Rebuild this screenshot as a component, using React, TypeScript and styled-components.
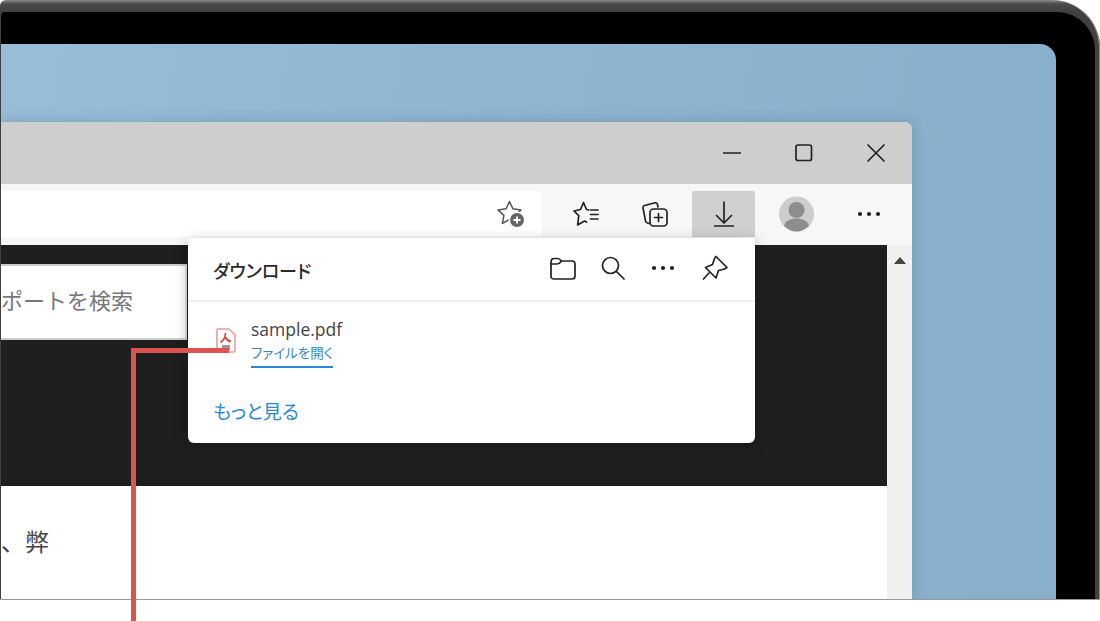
import React from 'react';
import styled, { createGlobalStyle } from 'styled-components';

const jp = `"Open Sans", "Noto Sans CJK JP", sans-serif`;

const GlobalStyle = createGlobalStyle`
  html, body {
    margin: 0;
    padding: 0;
    background: #fff;
  }
  #root {
    position: relative;
    width: 1100px;
    height: 621px;
    overflow: hidden;
    font-family: ${jp};
  }
`;

const Bezel = styled.div`
  box-sizing: border-box;
  width: 1100px;
  height: 600px;
  padding: 12px 5px 0 1px;
  background: linear-gradient(180deg, #8a8a8a 0, #4a4a4a 4px, #404040 12px);
  border-radius: 6px 48px 0 0;
  border-bottom: 1px solid #999;
  box-shadow: inset -1px 0 0 #8a8a8a;
`;

const Screen = styled.div`
  box-sizing: border-box;
  height: 100%;
  padding: 32px 39px 0 0;
  background: #000;
  border-radius: 4px 38px 0 0;
`;

const Desktop = styled.div`
  box-sizing: border-box;
  height: 100%;
  padding: 78px 144px 0 0;
  background: linear-gradient(100deg, #97bdd8 0, #8fb5d1 45%, #87aeca 100%);
  border-radius: 0 16px 0 0;
  overflow: hidden;
`;

const Browser = styled.div`
  position: relative;
  height: 100%;
  display: flex;
  flex-direction: column;
  border-radius: 0 8px 0 0;
  background: #fff;
  box-shadow: 0 0 14px rgba(40, 60, 80, 0.22);
`;

const TitleBar = styled.div`
  height: 62px;
  flex: none;
  display: flex;
  justify-content: flex-end;
  align-items: center;
  background: #cecece;
  border-radius: 0 8px 0 0;
`;

const WindowButton = styled.div`
  width: 72px;
  height: 31px;
  display: flex;
  align-items: center;
  justify-content: center;
`;

const Toolbar = styled.div`
  box-sizing: border-box;
  height: 61px;
  flex: none;
  display: flex;
  align-items: flex-start;
  gap: 6px;
  padding: 7px 12px 0 0;
  background: #f7f7f7;
`;

const AddressBar = styled.div`
  flex: 1;
  height: 46px;
  margin-right: 6px;
  display: flex;
  align-items: center;
  justify-content: flex-end;
  padding-right: 17px;
  background: #fff;
  border-radius: 0 6px 0 0;
`;

const ToolButton = styled.div<{ $active?: boolean; $wide?: boolean }>`
  width: ${(p) => (p.$wide ? 70 : 63)}px;
  height: 46px;
  flex: none;
  display: flex;
  align-items: center;
  justify-content: center;
  border-radius: 3px 3px 0 0;
  background: ${(p) => (p.$active ? '#d0d0d0' : 'transparent')};
`;

const Content = styled.div`
  flex: 1;
  display: flex;
  min-height: 0;
`;

const Main = styled.div`
  flex: 1;
  display: flex;
  flex-direction: column;
`;

const HeroBand = styled.div`
  box-sizing: border-box;
  height: 241px;
  padding-top: 19px;
  background: #1f1f1f;
`;

const SearchBox = styled.div`
  box-sizing: border-box;
  width: 186px;
  height: 76px;
  padding-bottom: 6px;
  display: flex;
  align-items: center;
  background: #fff;
  border-top: 2px solid #ccc;
  border-bottom: 2px solid #ccc;
  border-right: 2px solid #e4e4e4;
  font-size: 22px;
  color: #777;
  white-space: nowrap;
  overflow: hidden;
`;

const Article = styled.div`
  flex: 1;
  padding-top: 39px;
  background: #fff;
  border-radius: 0 0 0 5px;
  font-size: 24px;
  line-height: 34px;
  color: #444;
`;

const Scrollbar = styled.div`
  width: 25px;
  flex: none;
  display: flex;
  justify-content: center;
  padding-top: 12px;
  background: #f0f0f0;
  box-sizing: border-box;
`;

const ScrollArrow = styled.div`
  width: 0;
  height: 0;
  border-left: 6px solid transparent;
  border-right: 6px solid transparent;
  border-bottom: 7px solid #444;
`;

const DownloadPanel = styled.div`
  position: absolute;
  left: 187px;
  top: 116px;
  width: 567px;
  height: 205px;
  display: flex;
  flex-direction: column;
  background: #fff;
  border-radius: 2px 0 6px 6px;
  box-shadow: 0 3px 14px rgba(0, 0, 0, 0.28);
`;

const PanelHeader = styled.div`
  box-sizing: border-box;
  height: 64px;
  flex: none;
  display: flex;
  align-items: center;
  padding: 0 15px 2px 25px;
  border-bottom: 2px solid #f1f1f1;
`;

const PanelTitle = styled.div`
  flex: 1;
  margin-top: 3px;
  font-size: 18px;
  font-weight: 500;
  font-feature-settings: 'palt';
  color: #2b2b2b;
`;

const PanelAction = styled.div`
  width: 50px;
  height: 40px;
  display: flex;
  align-items: center;
  justify-content: center;

  &:last-child {
    margin-left: 2px;
  }
`;

const FileRow = styled.div`
  display: flex;
  padding: 15px 0 0 28px;
`;

const FileInfo = styled.div`
  margin-left: 15px;
  display: flex;
  flex-direction: column;
  align-items: flex-start;
`;

const FileName = styled.div`
  font-size: 17.5px;
  line-height: 24px;
  color: #444;
`;

const OpenLink = styled.div`
  padding-bottom: 1px;
  font-size: 13.5px;
  line-height: 24px;
  font-feature-settings: 'palt';
  color: #3a87c8;
  border-bottom: 2px solid #2b88d8;
`;

const MoreLink = styled.div`
  margin: 32px 0 0 25px;
  font-size: 19px;
  line-height: 24px;
  font-feature-settings: 'palt';
  color: #2b88d8;
`;

const FileIcon = styled.svg`
  margin-top: 11px;
  flex: none;
`;

const Callout = styled.div`
  position: absolute;
  left: 131px;
  top: 348px;
  width: 93px;
  height: 273px;
  border-top: 5px solid #db5450;
  border-left: 5px solid #db5450;
`;

const ink = { fill: 'none', stroke: '#222', strokeWidth: 1.7, strokeLinecap: 'round', strokeLinejoin: 'round' } as const;

const Dots = () => (
  <svg width="24" height="6" viewBox="0 0 24 6">
    <circle cx="3" cy="3" r="2.1" fill="#222" />
    <circle cx="12" cy="3" r="2.1" fill="#222" />
    <circle cx="21" cy="3" r="2.1" fill="#222" />
  </svg>
);

export default function App() {
  return (
    <>
      <GlobalStyle />
      <Bezel>
        <Screen>
          <Desktop>
            <Browser>
              <TitleBar>
                <WindowButton>
                  <svg width="18" height="2" viewBox="0 0 18 2">
                    <path d="M0 1H18" stroke="#222" strokeWidth="1.6" />
                  </svg>
                </WindowButton>
                <WindowButton>
                  <svg width="18" height="18" viewBox="0 0 18 18">
                    <rect x="1" y="1" width="15.5" height="15.5" rx="2" {...ink} />
                  </svg>
                </WindowButton>
                <WindowButton>
                  <svg width="18" height="18" viewBox="0 0 18 18">
                    <path d="M1 1L17 17M17 1L1 17" {...ink} />
                  </svg>
                </WindowButton>
              </TitleBar>
              <Toolbar>
                <AddressBar>
                  <svg width="28" height="28" viewBox="0 0 28 28">
                    <path
                      d="M12.5 1.5L15.9 8.8L24 9.9L18.1 15.4L19.6 23.4L12.5 19.5L5.4 23.4L6.9 15.4L1 9.9L9.1 8.8Z"
                      fill="none"
                      stroke="#555"
                      strokeWidth="1.5"
                      strokeLinejoin="round"
                    />
                    <circle cx="20" cy="20" r="8.5" fill="#fff" />
                    <circle cx="20" cy="20" r="7" fill="#666" />
                    <path d="M20 16.5V23.5M16.5 20H23.5" stroke="#fff" strokeWidth="1.8" />
                  </svg>
                </AddressBar>
                <ToolButton>
                  <svg width="26" height="26" viewBox="0 0 26 26">
                    <path d="M15.5 8.8L13.5 8.5L10.5 1.5L7.5 8.5L1 10L5.8 14.7L4.6 24L11.5 20L13.5 21" {...ink} />
                    <path d="M17.5 9H25M17.5 13.5H25M17.5 18H25" {...ink} />
                  </svg>
                </ToolButton>
                <ToolButton>
                  <svg width="26" height="26" viewBox="0 0 26 26">
                    <rect x="8" y="8" width="17" height="17" rx="3.5" {...ink} />
                    <path d="M16.5 12.5V20.5M12.5 16.5H20.5" {...ink} />
                    <path d="M7 22.5L5.5 22Q4 21.5 3.5 20L1 7Q0.7 5 2.5 4.5L13 1.8Q15 1.5 15.5 3.5L16 6" {...ink} />
                  </svg>
                </ToolButton>
                <ToolButton $active>
                  <svg width="22" height="26" viewBox="0 0 22 26">
                    <path d="M11 1V22M3.5 14.5L11 22L18.5 14.5M1.5 25H20.5" {...ink} />
                  </svg>
                </ToolButton>
                <ToolButton $wide>
                  <svg width="36" height="36" viewBox="0 0 36 36">
                    <circle cx="18.5" cy="18" r="17.5" fill="#cdcdcd" />
                    <circle cx="18.5" cy="14" r="8" fill="#8d8d8d" />
                    <path d="M6 30C7.5 24.5 12.5 22.5 18.5 22.5C24.5 22.5 29.5 24.5 31 30C27.5 33.5 23 35.5 18.5 35.5C14 35.5 9.5 33.5 6 30Z" fill="#8d8d8d" />
                  </svg>
                </ToolButton>
                <ToolButton>
                  <Dots />
                </ToolButton>
              </Toolbar>
              <Content>
                <Main>
                  <HeroBand>
                    <SearchBox>ポートを検索</SearchBox>
                  </HeroBand>
                  <Article>、弊</Article>
                </Main>
                <Scrollbar>
                  <ScrollArrow />
                </Scrollbar>
              </Content>
              <DownloadPanel>
                <PanelHeader>
                  <PanelTitle>ダウンロード</PanelTitle>
                  <PanelAction>
                    <svg width="26" height="23" viewBox="0 0 26 23">
                      <path d="M1 5Q1 1.5 4 1.5H7.5Q9.5 1.5 11.5 4H22Q25 4 25 7V19Q25 22 22 22H4Q1 22 1 19Z" {...ink} />
                      <path d="M1 7H7Q9.5 7 11.5 4" {...ink} />
                    </svg>
                  </PanelAction>
                  <PanelAction>
                    <svg width="24" height="24" viewBox="0 0 24 24">
                      <circle cx="9.5" cy="9.5" r="8" {...ink} />
                      <path d="M15.5 15.5L23 23" {...ink} />
                    </svg>
                  </PanelAction>
                  <PanelAction>
                    <Dots />
                  </PanelAction>
                  <PanelAction>
                    <svg width="26" height="26" viewBox="0 0 26 26">
                      <path d="M14 1.5L25 12.5L22.5 14L16.5 15.5L14 23L3.5 12.5L10.5 9.5L12.5 3.5Z" {...ink} />
                      <path d="M7 18L1.5 24" {...ink} />
                    </svg>
                  </PanelAction>
                </PanelHeader>
                <FileRow>
                  <FileIcon width="20" height="25" viewBox="0 0 20 25">
                    <path
                      d="M1.5 1H13L19 7V22.5Q19 24 17.5 24H2.5Q1 24 1 22.5V1.5Z"
                      fill="#fff"
                      stroke="#f09a94"
                      strokeWidth="1.6"
                      strokeLinejoin="round"
                    />
                    <path d="M9.5 5C9.5 9 8 12 4.5 14.5M9.5 9.5C10.5 11.5 12 13 15 13.5" fill="none" stroke="#e0403a" strokeWidth="1.7" />
                    <rect x="6" y="17" width="8" height="5" fill="#999" />
                  </FileIcon>
                  <FileInfo>
                    <FileName>sample.pdf</FileName>
                    <OpenLink>ファイルを開く</OpenLink>
                  </FileInfo>
                </FileRow>
                <MoreLink>もっと見る</MoreLink>
              </DownloadPanel>
            </Browser>
          </Desktop>
        </Screen>
      </Bezel>
      <Callout />
    </>
  );
}
